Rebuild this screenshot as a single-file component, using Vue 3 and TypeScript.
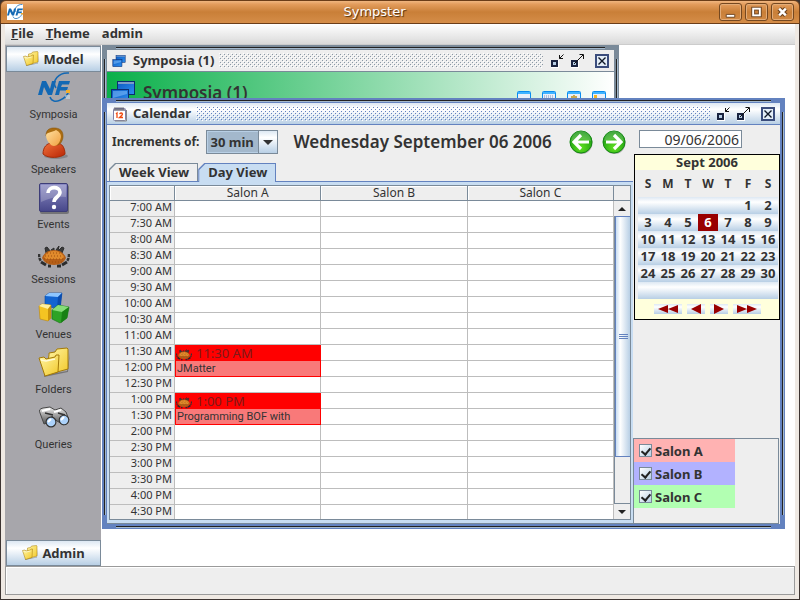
<script setup lang="ts">
import { ref } from 'vue'

interface Session {
  row: number
  time: string
  title: string
}

const navItems = ['Symposia', 'Speakers', 'Events', 'Sessions', 'Venues', 'Folders', 'Queries']
const rooms = ['Salon A', 'Salon B', 'Salon C']
const sessions: Session[] = [
  { row: 9, time: '11:30 AM', title: 'JMatter' },
  { row: 12, time: '1:00 PM', title: 'Programming BOF with' },
]

const slots: string[] = Array.from({ length: 20 }, (_, i) => {
  const hour = 7 + Math.floor(i / 2)
  return `${hour > 12 ? hour - 12 : hour}:${i % 2 ? '30' : '00'} ${hour < 12 ? 'AM' : 'PM'}`
})

const sessionAt = (row: number) => sessions.find((s) => s.row === row)
const isCovered = (row: number) => sessions.some((s) => s.row + 1 === row)

const weekdays = ['S', 'M', 'T', 'W', 'T', 'F', 'S']
const weeks: (number | null)[][] = Array.from({ length: 6 }, (_, w) =>
  Array.from({ length: 7 }, (_, d) => {
    const day = w * 7 + d - 4
    return day >= 1 && day <= 30 ? day : null
  }),
)

const selectedDay = ref(6)
const increment = ref('30 min')
const dateText = ref('09/06/2006')
const legend = ref([
  { name: 'Salon A', tone: 'rose', on: true },
  { name: 'Salon B', tone: 'violet', on: true },
  { name: 'Salon C', tone: 'mint', on: true },
])
</script>

<template>
  <div class="app">
    <svg class="defs" aria-hidden="true">
      <defs>
        <linearGradient id="gBlue" x1="0" y1="0" x2="1" y2="1"><stop offset="0" stop-color="#0a58c0" /><stop offset="1" stop-color="#2f90f0" /></linearGradient>
        <linearGradient id="gGold" x1="0" y1="0" x2="1" y2="1"><stop offset="0" stop-color="#fff6a8" /><stop offset="1" stop-color="#f2c828" /></linearGradient>
        <linearGradient id="gRed" x1="0" y1="0" x2="1" y2="1"><stop offset="0" stop-color="#f0713a" /><stop offset="1" stop-color="#b82404" /></linearGradient>
        <linearGradient id="gFace" x1="0" y1="0" x2="1" y2="1"><stop offset="0" stop-color="#ffe0a0" /><stop offset="1" stop-color="#f0a040" /></linearGradient>
        <linearGradient id="gHelp" x1="0" y1="0" x2="0" y2="1"><stop offset="0" stop-color="#8d8dc4" /><stop offset="1" stop-color="#47478a" /></linearGradient>
        <radialGradient id="gGo" cx=".5" cy=".75" r=".75"><stop offset="0" stop-color="#5fe020" /><stop offset="1" stop-color="#119010" /></radialGradient>
        <linearGradient id="gMetal" x1="0" y1="0" x2="0" y2="1"><stop offset="0" stop-color="#eeeeee" /><stop offset="1" stop-color="#484848" /></linearGradient>
        <pattern id="bumpsBlue" width="4" height="4" patternUnits="userSpaceOnUse">
          <path d="M0 0h1v1h-1zM2 2h1v1h-1z" fill="#fff" /><path d="M1 1h1v1h-1zM3 3h1v1h-1z" fill="#6382bf" />
        </pattern>
        <pattern id="bumpsGray" width="4" height="4" patternUnits="userSpaceOnUse">
          <path d="M0 0h1v1h-1zM2 2h1v1h-1z" fill="#fff" /><path d="M1 1h1v1h-1zM3 3h1v1h-1z" fill="#8b99a6" />
        </pattern>
      </defs>
      <symbol id="logo" viewBox="0 0 32 32">
        <path d="M31 1C21 0 13 9 18 16M31 18C29 27 15 34 12 25" fill="none" stroke="#1268b4" stroke-width="1.500" />
        <path d="M0 23 4 9h4l4 8 2-8h4l-4 14h-4l-4-8-2 8zM17 23l4-14h11l-1 3.500h-7l-1 2.500h7l-1 3.500h-7l-1 4.500z" fill="#1268b4" />
        <path d="M28 18h4v3h-4z" fill="#f4ae2c" /><path d="M27 24h5M28 26h4" stroke="#d6eaf8" />
      </symbol>
      <symbol id="person" viewBox="0 0 32 32">
        <ellipse cx="18" cy="29" rx="12" ry="3" fill="#000" opacity=".2" />
        <path d="M5 27C5 20 9 16 14 16h5c5 0 8 5 8 11-4 4-17 5-22 0z" fill="url(#gRed)" stroke="#a32c08" />
        <path d="M8 9C8 3 11 1 16 1s9 2 9 8c0 5-3 9-6 9-6 0-9-4-9-9z" fill="#aa6c10" stroke="#8a5408" stroke-width=".6" />
        <path d="M8 8c1-3 7-3 10-5 2 1 5 3 5 7-1 6-4 9-7 9s-8-5-8-11z" fill="url(#gFace)" />
      </symbol>
      <symbol id="help" viewBox="0 0 32 32">
        <rect x="2" y="3" width="29" height="29" rx="2" fill="#000" opacity=".3" />
        <rect x="1.500" y="1.500" width="28" height="28" rx="1.500" fill="url(#gHelp)" stroke="#3d3d78" />
        <path d="M3 3h25v12Q16 14 3 20z" fill="#fff" opacity=".22" />
        <path d="M10 11c0-7 12-7 12-1 0 5-6 5-6 10" fill="none" stroke="#fff" stroke-width="3.600" /><circle cx="16" cy="25" r="2.200" fill="#fff" />
      </symbol>
      <symbol id="crab" viewBox="0 0 32 24">
        <path d="m8 8-1-5 2-1 4 5zM24 8l2-5-2-1-5 5zM13 5l3-2v3zM18 5l3-4-1 5z" fill="#3a3a3a" stroke="#2c2c2c" />
        <path d="M1 9q0 5 2 7M31 9q0 5-2 7" fill="none" stroke="#333" stroke-width="2.500" stroke-dasharray="3 1" />
        <path d="m3 17 5 3M29 17l-5 3M10 21h3M19 21h4" stroke="#2c2c2c" stroke-width="3" />
        <path d="M4 13q3-8 12-8t12 8q-3 7-12 7T4 13z" fill="#b55f18" />
        <path d="M6 12q3-6 10-6t10 6l-2 2H8z" fill="#e08a2c" />
        <path d="M9 8h14M7 11h18M6 14h20M8 17h16" stroke="#9c4e10" stroke-dasharray="1 2" />
      </symbol>
      <symbol id="cubes" viewBox="0 0 32 32">
        <path d="M7 4 11 1h13l-2 12-5 3-10-2z" fill="#1264d0" stroke="#0a4aa0" stroke-width=".6" /><path d="m7 4 4-3h13l-4 4z" fill="#8ec6ff" /><path d="M20 5 24 1l-1 12-4 3z" fill="#0a4cae" />
        <path d="m1 14 3-2 9 1v13l-3 3-8-2z" fill="#f4c422" stroke="#b88410" stroke-width=".6" /><path d="m1 14 3-2 9 1-3 4z" fill="#fff0a0" /><path d="m10 17 3-4v13l-3 3z" fill="#c8920c" />
        <path d="m14 18 6-5 11 2-2 11-7 5-8-4z" fill="#2da326" stroke="#157012" stroke-width=".6" /><path d="m14 18 6-5 11 2-7 5z" fill="#86dc78" /><path d="m24 20 7-5-2 11-6 5z" fill="#188014" />
      </symbol>
      <symbol id="folder" viewBox="0 0 32 32">
        <path d="m6 30 24-5 2-20-3 19-23 4z" fill="#000" opacity=".3" />
        <path d="M11 8V6l6-1 2-3 10-1 1 1v20L8 28z" fill="url(#gGold)" stroke="#a47a08" />
        <path d="m1 11 5-1 2 2 9-2 1-2h3l-1 17-13 4z" fill="url(#gGold)" stroke="#a47a08" /><path d="m3 13 5 1 9-2" fill="none" stroke="#fffbd8" stroke-width="1.500" />
      </symbol>
      <symbol id="binoculars" viewBox="0 0 32 24">
        <path d="M2 7q-2-4 3-5l7-1 5 3 6-2 5 4 3 8-5 5-7-4-5-5-2 6-6 2z" fill="url(#gMetal)" stroke="#484848" />
        <path d="m4 5 8-2M16 6l7-2" stroke="#fff" stroke-width="2" /><path d="m7 7 8 2M20 7l7 2" stroke="#333" stroke-width="1.500" />
        <circle cx="13" cy="16" r="5.500" fill="#333" /><circle cx="13" cy="16" r="4.300" fill="#acd2fb" /><circle cx="26" cy="14" r="5.300" fill="#333" /><circle cx="26" cy="14" r="4.200" fill="#acd2fb" />
        <path d="m10 16 3-3M23 14l3-3" stroke="#fff" stroke-width="2" />
      </symbol>
      <symbol id="windows" viewBox="0 0 26 24">
        <rect x="7.500" y="1.500" width="17" height="13" fill="url(#gBlue)" stroke="#0b2c70" /><rect x="8" y="2" width="16" height="2" fill="#7a9cc8" />
        <rect x="1.500" y="9.500" width="17" height="13" fill="url(#gBlue)" stroke="#0b2c70" /><path d="M3 11h14v3l-14 4z" fill="#8cc8ff" opacity=".5" />
      </symbol>
      <symbol id="iconify" viewBox="0 0 14 14">
        <path d="M1 6h8v8H1z" fill="#fff" /><path d="M2 7h5v5H2z" fill="#b8cfe5" stroke="#1a2440" stroke-width="2" /><path d="M13.500 .5 9.500 4.500M9.500 1v3.500H13" fill="none" stroke="#111" />
      </symbol>
      <symbol id="maximize" viewBox="0 0 14 14">
        <path d="M1 6h8v8H1z" fill="#fff" /><path d="M2 7h5v5H2z" fill="#b8cfe5" stroke="#1a2440" stroke-width="2" /><path d="m4 10 9-9M9.500 .5h4V5" fill="none" stroke="#111" />
      </symbol>
      <symbol id="close" viewBox="0 0 14 14">
        <rect x="1" y="1" width="12" height="12" fill="#e4eef8" stroke="#3a4c7c" stroke-width="2" /><path d="m3.500 3.500 7 7m0-7-7 7" stroke="#101828" stroke-width="1.400" />
      </symbol>
    </svg>

    <header class="os-title">
      <svg class="app-icon" viewBox="0 0 16 16"><rect width="16" height="16" fill="#fff" /><use href="#logo" width="16" height="16" /></svg>
      <h1>Sympster</h1>
      <button class="os-btn" aria-label="Minimize"><svg viewBox="0 0 22 16"><path d="M6.500 10.500h9v3h-9z" fill="#fff" stroke="#6e4420" /></svg></button>
      <button class="os-btn" aria-label="Maximize"><svg viewBox="0 0 22 16"><rect x="7.500" y="4.500" width="7" height="7" fill="none" stroke="#6e4420" stroke-width="4" /><rect x="7.500" y="4.500" width="7" height="7" fill="none" stroke="#fff" stroke-width="2" /></svg></button>
      <button class="os-btn" aria-label="Close"><svg viewBox="0 0 22 16"><path d="m7.500 4.500 7 7m0-7-7 7" stroke="#6e4420" stroke-width="5" /><path d="m7.500 4.500 7 7m0-7-7 7" stroke="#fff" stroke-width="2.600" /></svg></button>
    </header>

    <div class="frame">
      <nav class="menubar">
        <button><u>F</u>ile</button>
        <button><u>T</u>heme</button>
        <button>admin</button>
      </nav>

      <div class="workspace">
        <aside class="sidebar">
          <button class="group"><svg class="i16"><use href="#folder" /></svg>Model</button>
          <ul>
            <li v-for="item in navItems" :key="item">
              <a href="#">
                <svg class="i32">
                  <use v-if="item === 'Symposia'" href="#logo" />
                  <use v-else-if="item === 'Speakers'" href="#person" />
                  <use v-else-if="item === 'Events'" href="#help" />
                  <use v-else-if="item === 'Sessions'" href="#crab" y="8" height="24" />
                  <use v-else-if="item === 'Venues'" href="#cubes" />
                  <use v-else-if="item === 'Folders'" href="#folder" />
                  <use v-else href="#binoculars" y="4" height="24" />
                </svg>
                <span>{{ item }}</span>
              </a>
            </li>
          </ul>
          <button class="group">
            <svg class="i16"><use href="#folder" /></svg>Admin
          </button>
        </aside>

        <main class="desktop">
          <section class="window back">
            <i class="edge top"></i><i class="edge left"></i><i class="edge right"></i>
            <div class="inner">
              <div class="win-title">
                <svg class="i16"><use href="#windows" width="14" height="14" y="1" /></svg>
                <h2>Symposia (1)</h2>
                <svg class="bumps"><rect width="100%" height="100%" fill="url(#bumpsGray)" shape-rendering="crispEdges" /></svg>
                <button aria-label="Iconify"><svg><use href="#iconify" /></svg></button>
                <button aria-label="Maximize"><svg><use href="#maximize" /></svg></button>
                <button aria-label="Close"><svg><use href="#close" /></svg></button>
              </div>
              <div class="banner">
                <svg class="banner-icon"><use href="#windows" /></svg>
                <h3>Symposia (1)</h3>
                <button v-for="n in 4" :key="n" :aria-label="`View ${n}`">
                  <svg viewBox="0 0 14 14"><rect x=".5" y=".5" width="13" height="13" rx="1" fill="#e9eff9" stroke="#0a8cf0" /><path d="M1 2h12" stroke="#40b4ff" stroke-width="2" />
                    <path v-if="n === 2" d="M2 5h10M2 7h10" stroke="#7890b8" stroke-dasharray="1 1" />
                    <path v-if="n === 3" d="M7 4v4M4 6h6" stroke="#caa850" stroke-width="2" />
                    <path v-if="n === 4" d="M2 4h3v4H2z" fill="#f6b520" /></svg>
                </button>
              </div>
            </div>
          </section>

          <section class="window front">
            <i class="edge top"></i><i class="edge bottom"></i><i class="edge left"></i><i class="edge right"></i>
            <div class="inner">
              <div class="win-title">
                <svg class="i16" viewBox="0 0 16 16">
                  <rect x="1.500" y="2.500" width="12" height="12" rx="1" fill="#fff" stroke="#8080a8" /><path d="M2 3h11v2H2z" fill="#9a9aa8" /><path d="M3 1v3M5 1v3M7 1v3M9 1v3M11 1v3" stroke="#444" stroke-width=".7" />
                  <path d="m4 8 1-1v5M7.500 8q2-2 3 0 0 1-3 3.500h3.500" fill="none" stroke="#f04a10" stroke-width="1.300" /><path d="M14.500 4v11H3" fill="none" stroke="#888" />
                </svg>
                <h2>Calendar</h2>
                <svg class="bumps"><rect width="100%" height="100%" fill="url(#bumpsBlue)" shape-rendering="crispEdges" /></svg>
                <button aria-label="Iconify"><svg><use href="#iconify" /></svg></button>
                <button aria-label="Maximize"><svg><use href="#maximize" /></svg></button>
                <button aria-label="Close"><svg><use href="#close" /></svg></button>
              </div>

              <div class="body">
                <div class="planner">
                  <div class="toolbar">
                    <label for="increment">Increments of:</label>
                    <div class="combo">
                      <select id="increment" v-model="increment">
                        <option>15 min</option>
                        <option>30 min</option>
                        <option>60 min</option>
                      </select>
                      <span class="combo-arrow"><svg viewBox="0 0 10 5"><path d="M0 0h10L5 5z" fill="#333" /></svg></span>
                    </div>
                    <h3>Wednesday September 06 2006</h3>
                    <button class="go" aria-label="Previous day"><svg viewBox="0 0 24 24"><circle cx="12.500" cy="13" r="11" fill="#000" opacity=".3" /><circle cx="12" cy="12" r="11" fill="url(#gGo)" stroke="#138a12" /><path d="M2 11a10 10 0 0 1 20 0q-10-3-20 0z" fill="#fff" opacity=".2" /><path d="m12 5-7 7 7 7M6 12h14" fill="none" stroke="#fff" stroke-width="3.200" /></svg></button>
                    <button class="go" aria-label="Next day"><svg viewBox="0 0 24 24"><circle cx="12.500" cy="13" r="11" fill="#000" opacity=".3" /><circle cx="12" cy="12" r="11" fill="url(#gGo)" stroke="#138a12" /><path d="M2 11a10 10 0 0 1 20 0q-10-3-20 0z" fill="#fff" opacity=".2" /><path d="m12 5 7 7-7 7M18 12H4" fill="none" stroke="#fff" stroke-width="3.200" /></svg></button>
                  </div>

                  <div class="tabs" role="tablist">
                    <button class="tab" role="tab"><span>Week View</span></button>
                    <button class="tab active" role="tab" aria-selected="true"><span>Day View</span></button>
                  </div>

                  <div class="pane">
                    <div class="grid">
                      <div class="sheet">
                        <table>
                          <thead>
                            <tr>
                              <th class="time-col"></th>
                              <th v-for="room in rooms" :key="room" scope="col">{{ room }}</th>
                            </tr>
                          </thead>
                          <tbody>
                            <tr v-for="(slot, row) in slots" :key="slot">
                              <th scope="row">{{ slot }}</th>
                              <td v-if="sessionAt(row)" class="booked" rowspan="2">
                                <div class="session">
                                  <div class="session-time"><svg class="i16"><use href="#crab" y="4" height="12" /></svg>{{ sessionAt(row)?.time }}</div>
                                  <div class="session-name">{{ sessionAt(row)?.title }}</div>
                                </div>
                              </td>
                              <td v-else-if="!isCovered(row)"></td>
                              <td></td>
                              <td></td>
                            </tr>
                          </tbody>
                        </table>
                      </div>
                      <div class="scroll">
                        <div class="corner"></div>
                        <button class="step" aria-label="Scroll up"><svg viewBox="0 0 8 4"><path d="M0 4h8L4 0z" fill="#222" /></svg></button>
                        <div class="track"><div class="thumb"><i></i><i></i><i></i></div></div>
                        <button class="step" aria-label="Scroll down"><svg viewBox="0 0 8 4"><path d="M0 0h8L4 4z" fill="#222" /></svg></button>
                      </div>
                    </div>
                  </div>
                </div>

                <aside class="side">
                  <input v-model="dateText" class="date" type="text" aria-label="Date" />
                  <div class="month">
                    <h4>Sept 2006</h4>
                    <table>
                      <thead>
                        <tr><th v-for="(d, i) in weekdays" :key="i">{{ d }}</th></tr>
                      </thead>
                      <tbody>
                        <tr v-for="(week, w) in weeks" :key="w">
                          <td v-for="(day, d) in week" :key="d">
                            <button v-if="day" :class="{ today: day === selectedDay }" @click="selectedDay = day">{{ day }}</button>
                          </td>
                        </tr>
                      </tbody>
                    </table>
                    <div class="month-nav">
                      <button class="wide" aria-label="Previous year"><svg viewBox="0 0 20 10"><path d="M0 5 10 1v8zM10 5l10-4v8z" /></svg></button>
                      <button aria-label="Previous month"><svg viewBox="0 0 10 10"><path d="M0 5 10 0v10z" /></svg></button>
                      <button aria-label="Next month"><svg viewBox="0 0 10 10"><path d="M10 5 0 0v10z" /></svg></button>
                      <button class="wide" aria-label="Next year"><svg viewBox="0 0 20 10"><path d="M20 5 10 1v8zM10 5 0 1v8z" /></svg></button>
                    </div>
                  </div>
                  <div class="legend">
                    <label v-for="entry in legend" :key="entry.name" :class="entry.tone">
                      <input v-model="entry.on" type="checkbox" />{{ entry.name }}
                    </label>
                  </div>
                </aside>
              </div>
            </div>
          </section>
        </main>
      </div>

      <footer class="status"></footer>
    </div>
  </div>
</template>

<style>
body {
  margin: 0;
}
</style>

<style scoped>
.app,
.app * {
  box-sizing: border-box;
}
.app {
  display: flex;
  flex-direction: column;
  height: 100vh;
  background: #3d3431;
  color: #333;
  font: bold 12px/16px 'Noto Sans', 'Open Sans', sans-serif;
}
.defs {
  position: absolute;
  width: 0;
  height: 0;
}
h1,
h2,
h3,
h4,
ul {
  margin: 0;
  padding: 0;
}
button {
  padding: 0;
  border: 0;
  background: none;
  color: inherit;
  font: inherit;
}
.i16 {
  width: 16px;
  height: 16px;
  flex: none;
}
.i32 {
  width: 32px;
  height: 32px;
}

.os-title {
  display: flex;
  align-items: center;
  gap: 3px;
  height: 24px;
  flex: none;
  padding: 0 5px 0 6px;
  border: 1px solid #6b3d18;
  border-radius: 6px 6px 0 0;
  background: linear-gradient(#f0b680, #e39c5c 15%, #c97f38 50%, #d58d48);
}
.app-icon {
  width: 16px;
  height: 16px;
}
.os-title h1 {
  flex: 1;
  padding-left: 7px;
  text-align: center;
  color: #fff;
  font: 13px/18px 'DejaVu Sans', sans-serif;
  text-shadow: 1px 1px 1px #4a2a0c;
}
.os-btn {
  width: 23px;
  height: 18px;
  border: 1px solid #754820;
  border-radius: 3px;
  box-shadow: inset 0 0 0 1px #e3ac78;
}
.os-btn svg {
  display: block;
  width: 100%;
  height: 100%;
}

.frame {
  display: flex;
  flex: 1;
  flex-direction: column;
  min-height: 0;
  margin: 0 1px 1px;
  padding: 0 4px 4px;
  background: #efe9e3;
}
.menubar {
  display: flex;
  gap: 12px;
  flex: none;
  height: 21px;
  padding: 0 6px 2px;
  border-bottom: 1px solid #ccc;
  background: linear-gradient(#fff, #dadada);
  font-size: 13px;
}
.workspace {
  display: flex;
  flex: 1;
  min-height: 0;
  background: #fff;
}
.sidebar {
  display: flex;
  flex-direction: column;
  width: 96px;
  flex: none;
  padding: 1px 0 0 1px;
  background: #a7a6ab;
}
.group {
  display: flex;
  align-items: center;
  justify-content: center;
  gap: 4px;
  height: 26px;
  flex: none;
  padding-bottom: 1px;
  border: 1px solid #7a8a99;
  background: linear-gradient(#dde8f3, #fff 30%, #b8cfe5);
  font-size: 13px;
}
.sidebar ul {
  flex: 1;
  list-style: none;
}
.sidebar li {
  height: 55px;
}
.sidebar a {
  display: flex;
  flex-direction: column;
  align-items: center;
  gap: 2px;
  color: #333;
  font: 11px/18px Roboto, 'Noto Sans', sans-serif;
  text-decoration: none;
}

.desktop {
  position: relative;
  flex: 1;
  overflow: hidden;
}
.window {
  position: absolute;
  padding: 5px;
}
.back {
  top: 0;
  left: 1px;
  width: calc(75% - 4px);
  height: 120px;
  background: #7a8a99;
}
.front {
  top: 53px;
  right: 10px;
  bottom: 37px;
  left: 1px;
  background: #6382bf;
}
.edge {
  position: absolute;
}
.edge.top,
.edge.bottom {
  right: 14px;
  left: 14px;
  height: 2px;
  border-top: 1px solid #222;
  background: #a3b8cc;
}
.edge.left,
.edge.right {
  top: 14px;
  bottom: 14px;
  width: 2px;
  border-left: 1px solid #222;
  background: #a3b8cc;
}
.edge.top {
  top: 2px;
}
.edge.bottom {
  bottom: 1px;
}
.edge.left {
  left: 2px;
}
.edge.right {
  right: 1px;
}
.inner {
  display: flex;
  flex-direction: column;
  height: 100%;
  background: #eee;
}
.win-title {
  display: flex;
  align-items: center;
  height: 22px;
  flex: none;
  padding: 0 5px;
  border-bottom: 1px solid #7a8a99;
  font-size: 13px;
}
.front .win-title {
  border-color: #6382bf;
  background: linear-gradient(#dde8f3, #fff 30%, #b8cfe5);
}
.win-title h2 {
  margin: 0 5px;
  padding-bottom: 2px;
  font-size: 13px;
}
.bumps {
  flex: 1;
  min-width: 0;
  height: 15px;
}
.win-title button {
  width: 14px;
  height: 14px;
  margin-left: 6px;
}
.win-title button:last-child {
  margin-left: 11px;
}
.win-title svg {
  display: block;
}
.win-title button svg {
  width: 14px;
  height: 14px;
}
.banner {
  display: flex;
  align-items: flex-start;
  gap: 11px;
  height: 44px;
  padding: 8px 8px 0 3px;
  background: linear-gradient(90deg, #0ab04a, #fff);
}
.banner-icon {
  width: 26px;
  height: 24px;
}
.banner h3 {
  flex: 1;
  margin-left: -4px;
  font-weight: 600;
  font-size: 17px;
  line-height: 25px;
}
.banner button {
  padding-top: 11px;
}
.banner button svg {
  display: block;
  width: 14px;
  height: 14px;
}

.body {
  display: flex;
  flex: 1;
  min-height: 0;
}
.planner {
  display: flex;
  flex: 1;
  flex-direction: column;
  min-width: 0;
}
.toolbar {
  display: flex;
  align-items: center;
  height: 38px;
  flex: none;
  padding: 0 7px 4px 5px;
}
.combo {
  display: flex;
  width: 72px;
  height: 24px;
  margin-left: 7px;
  border: 1px solid #7a8a99;
  position: relative;
}
.combo select {
  width: 100%;
  padding: 0 0 0 2px;
  border: 1px solid #b8cfe5;
  border-radius: 0;
  appearance: none;
  background: #a3b8cc;
  color: #333;
  font: bold 13px/20px 'Noto Sans', sans-serif;
}
.combo-arrow {
  position: absolute;
  top: 0;
  right: 0;
  bottom: 0;
  display: grid;
  place-items: center;
  width: 19px;
  border-left: 1px solid #7a8a99;
  background: linear-gradient(#dde8f3, #fff 30%, #b8cfe5);
  pointer-events: none;
}
.combo-arrow svg {
  width: 10px;
  height: 5px;
}
.toolbar h3 {
  flex: 1;
  padding-left: 15px;
  font-weight: 600;
  font-size: 17px;
  line-height: 24px;
  white-space: nowrap;
}
.go {
  width: 24px;
  height: 24px;
  margin-left: 9px;
}
.go svg {
  display: block;
  width: 24px;
  height: 24px;
}
.tabs {
  display: flex;
  flex: none;
  height: 19px;
  padding-left: 2px;
  border-bottom: 1px solid #6382bf;
}
.tab {
  height: 18px;
  background: #7a8a99;
  clip-path: polygon(0 6px, 6px 0, 100% 0, 100% 100%, 0 100%);
  padding: 1px 1px 0;
  font-size: 13px;
  line-height: 17px;
}
.tab span {
  display: block;
  padding: 0 8px 0 9px;
  background: #eee;
  clip-path: polygon(0 6px, 6px 0, 100% 0, 100% 100%, 0 100%);
}
.tab.active {
  height: 19px;
  background: #6382bf;
}
.tab.active span {
  height: 18px;
  background: #c8ddf2;
}
.pane {
  flex: 1;
  min-height: 0;
  padding: 3px 2px;
  border-bottom: 1px solid #7a8a99;
  background: #c8ddf2;
}
.grid {
  display: flex;
  height: 100%;
  overflow: hidden;
  border: 1px solid #7a8a99;
  border-right: 0;
  background: #fff;
}
.sheet {
  flex: 1;
  min-width: 0;
}
.grid table {
  width: 100%;
  border-spacing: 0;
  table-layout: fixed;
  font-weight: normal;
  font-size: 11px;
  line-height: 15px;
}
.grid th,
.grid td {
  height: 16px;
  padding: 0;
  border-right: 1px solid #bdbdbd;
  border-bottom: 1px solid #bdbdbd;
  font-weight: normal;
}
.grid th {
  background: #eee;
}
.grid thead th {
  height: 15px;
  border-color: #7a8a99;
  font-size: 12px;
  line-height: 14px;
  box-shadow: inset 1px 1px #fff;
}
.grid .time-col {
  width: 65px;
}
.grid tbody th {
  padding-right: 2px;
  text-align: right;
  line-height: 12px;
  vertical-align: top;
}
.grid .booked {
  border: 0;
}
.session {
  display: flex;
  flex-direction: column;
  height: 32px;
  border: 1px solid #f00;
  border-top: 0;
  background: #f97979;
}
.session-time {
  display: flex;
  gap: 4px;
  height: 16px;
  background: #f00;
  color: #7c1a1a;
  font-size: 13px;
  line-height: 17px;
}
.session-name {
  padding-left: 1px;
  font-family: Roboto, 'Noto Sans', sans-serif;
  line-height: 16px;
  white-space: nowrap;
}
.scroll {
  display: flex;
  flex-direction: column;
  width: 17px;
  flex: none;
  border-right: 1px solid #7a8a99;
}
.corner {
  height: 15px;
  flex: none;
  border-bottom: 1px solid #7a8a99;
  background: #eee;
}
.step {
  display: grid;
  place-items: center;
  height: 15px;
  flex: none;
  background: #eee;
}
.step svg {
  width: 8px;
  height: 4px;
}
.track {
  display: flex;
  flex: 1;
  flex-direction: column;
  border-bottom: 1px solid #7a8a99;
  border-left: 1px solid #7a8a99;
  background: #eee;
}
.thumb {
  display: flex;
  flex-direction: column;
  align-items: center;
  justify-content: center;
  gap: 1px;
  height: 84%;
  border: 1px solid #6382bf;
  border-right: 0;
  background: linear-gradient(90deg, #c8ddf2, #fff 30%, #b8cfe5);
}
.thumb i {
  width: 9px;
  height: 1px;
  background: #6382bf;
}

.side {
  display: flex;
  flex-direction: column;
  width: 147px;
  flex: none;
  padding-top: 5px;
}
.date {
  width: 103px;
  height: 18px;
  flex: none;
  margin: 0 0 6px 6px;
  padding: 0 2px;
  border: 1px solid #7a8a99;
  border-radius: 0;
  background: #fff;
  color: #333;
  font: 14px/16px 'Noto Sans', sans-serif;
  text-align: right;
}
.month {
  flex: none;
  margin-left: 1px;
  border: 1px solid #000;
  font-size: 13px;
  text-align: center;
}
.month h4 {
  background: #ffffdc;
  font-size: 13px;
  line-height: 15px;
}
.month table {
  width: 140px;
  margin: 0 1px 0 auto;
  border-spacing: 0;
  table-layout: fixed;
  line-height: 17px;
}
.month th {
  height: 27px;
  padding: 0;
  font-size: 12px;
}
.month td {
  height: 17px;
  padding: 0;
  background: linear-gradient(#dde8f3, #fff 30%, #b8cfe5);
}
.month td button {
  display: block;
  width: 100%;
}
.month .today {
  background: #990000;
  color: #fff;
}
.month-nav {
  display: flex;
  align-items: center;
  justify-content: center;
  gap: 5px;
  height: 20px;
  background: #ffffdc;
}
.month-nav button {
  display: grid;
  place-items: center;
  width: 18px;
  height: 10px;
  background: linear-gradient(#dde8f3, #fff 30%, #b8cfe5);
}
.month-nav .wide {
  width: 28px;
}
.month-nav svg {
  width: 10px;
  height: 10px;
  fill: #990000;
}
.month-nav .wide svg {
  width: 20px;
}
.legend {
  height: 86px;
  margin: auto 1px 0 0;
  border: 1px solid #7a8a99;
  font-size: 13px;
}
.legend label {
  display: flex;
  align-items: center;
  gap: 3px;
  width: 101px;
  height: 23px;
  padding-left: 5px;
}
.rose {
  background: #ffb2b2;
}
.violet {
  background: #b2b2ff;
}
.mint {
  background: #b2ffb2;
}
.legend input {
  display: grid;
  place-items: center;
  width: 13px;
  height: 13px;
  margin: 0;
  border: 1px solid #7a8a99;
  appearance: none;
  background: linear-gradient(135deg, #fff, #b8cfe5);
}
.legend input:checked::after {
  width: 4px;
  height: 7px;
  border: solid #222;
  border-width: 0 2px 2px 0;
  content: '';
  transform: rotate(40deg);
}
.status {
  height: 29px;
  flex: none;
  border: 1px solid #9a9a9a;
  background: #eee;
  box-shadow: inset 1px 1px #fff;
}
</style>
